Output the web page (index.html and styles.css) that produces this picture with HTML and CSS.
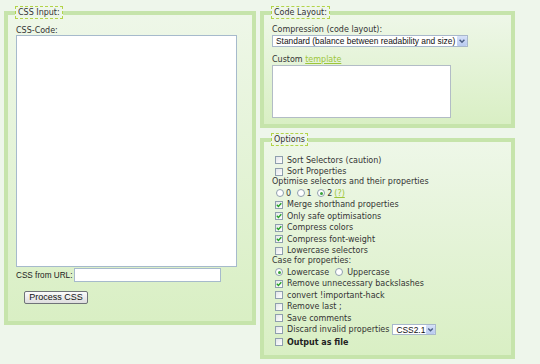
FILE: index.html
```html
<!DOCTYPE html>
<html>
<head>
<meta charset="utf-8">
<title>CSSTidy</title>
<link rel="stylesheet" href="styles.css">
</head>
<body>
<div class="page">
  <fieldset class="box input-box">
    <legend>CSS Input:</legend>
    <label class="lbl" for="css_text">CSS-Code:</label>
    <textarea id="css_text" class="code"></textarea>
    <div class="url-row">
      <label class="url-lbl" for="url">CSS from URL:</label>
      <input id="url" class="url" type="text">
    </div>
    <button class="btn" type="button">Process CSS</button>
  </fieldset>

  <div class="col">
    <fieldset class="box layout-box">
      <legend>Code Layout:</legend>
      <div class="lbl lbl-comp">Compression (code layout):</div>
      <div class="select sel-wide">
        <span class="sel-text">Standard (balance between readability and size)</span>
        <span class="arrow"><svg viewBox="0 0 10 10" width="10" height="10"><path d="M2.6 3.8 L5 6.2 L7.4 3.8" fill="none" stroke="#4b5f85" stroke-width="1.5"/></svg></span>
      </div>
      <div class="lbl lbl-custom">Custom <a class="lnk" href="#">template</a></div>
      <textarea class="tpl"></textarea>
    </fieldset>

    <fieldset class="box options">
      <legend>Options</legend>
      <div class="opt"><span class="cb"></span>Sort Selectors (caution)</div>
      <div class="opt"><span class="cb"></span>Sort Properties</div>
      <div class="txt">Optimise selectors and their properties</div>
      <div class="radios r-num">
        <span class="rb"></span><span>0</span>
        <span class="rb"></span><span>1</span>
        <span class="rb on"></span><span>2</span>
        <a class="lnk q" href="#">(?)</a>
      </div>
      <div class="opt"><span class="cb on"><svg viewBox="0 0 6 6" width="6" height="6"><path d="M0.8 2.8 L2.4 4.5 L5.3 1.2" fill="none" stroke="#24a224" stroke-width="1.3"/></svg></span>Merge shorthand properties</div>
      <div class="opt"><span class="cb on"><svg viewBox="0 0 6 6" width="6" height="6"><path d="M0.8 2.8 L2.4 4.5 L5.3 1.2" fill="none" stroke="#24a224" stroke-width="1.3"/></svg></span>Only safe optimisations</div>
      <div class="opt"><span class="cb on"><svg viewBox="0 0 6 6" width="6" height="6"><path d="M0.8 2.8 L2.4 4.5 L5.3 1.2" fill="none" stroke="#24a224" stroke-width="1.3"/></svg></span>Compress colors</div>
      <div class="opt"><span class="cb on"><svg viewBox="0 0 6 6" width="6" height="6"><path d="M0.8 2.8 L2.4 4.5 L5.3 1.2" fill="none" stroke="#24a224" stroke-width="1.3"/></svg></span>Compress font-weight</div>
      <div class="opt"><span class="cb"></span>Lowercase selectors</div>
      <div class="txt">Case for properties:</div>
      <div class="radios r-case">
        <span class="rb on"></span><span>Lowercase</span>
        <span class="rb"></span><span>Uppercase</span>
      </div>
      <div class="opt"><span class="cb on"><svg viewBox="0 0 6 6" width="6" height="6"><path d="M0.8 2.8 L2.4 4.5 L5.3 1.2" fill="none" stroke="#24a224" stroke-width="1.3"/></svg></span>Remove unnecessary backslashes</div>
      <div class="opt"><span class="cb"></span>convert !important-hack</div>
      <div class="opt"><span class="cb"></span>Remove last ;</div>
      <div class="opt"><span class="cb"></span>Save comments</div>
      <div class="opt opt-discard"><span class="cb"></span>Discard invalid properties
        <div class="select sel-small">
          <span class="sel-text">CSS2.1</span>
          <span class="arrow"><svg viewBox="0 0 9 9" width="9" height="9"><path d="M2.2 3.4 L4.5 5.7 L6.8 3.4" fill="none" stroke="#4b5f85" stroke-width="1.4"/></svg></span>
        </div>
      </div>
      <div class="opt opt-file"><span class="cb"></span><b>Output as file</b></div>
    </fieldset>
  </div>
</div>
</body>
</html>
```

FILE: styles.css
```css
html, body {
  margin: 0;
  padding: 0;
}

body {
  background: #eef6eb;
  color: #333;
  font-family: "DejaVu Sans", Verdana, sans-serif;
  font-size: 8px;
}

.page {
  display: flex;
  align-items: flex-start;
  gap: 4px;
  padding: 6px 0 0 4px;
}

.col {
  display: flex;
  flex-direction: column;
  width: 255px;
}

.box {
  box-sizing: border-box;
  min-width: 0;
  margin: 0;
  border: 4px solid #c6e4ab;
  background: linear-gradient(#eef7e8, #d9efc4);
  padding: 0 8px;
}

.box legend {
  border: 1px dashed #b3d448;
  padding: 0 2px;
  line-height: 11px;
  height: 11px;
  color: #333;
  margin-left: -1px;
}

.lbl {
  display: block;
  line-height: 9px;
  height: 9px;
}

/* CSS input */
.input-box {
  width: 252px;
  padding-top: 7px;
  padding-bottom: 17px;
}

.code {
  display: block;
  box-sizing: border-box;
  width: 221px;
  height: 232px;
  margin: 0;
  padding: 0;
  border: 1px solid #a6bacc;
  background: #fff;
  resize: none;
}

.url-row {
  display: flex;
  align-items: center;
  height: 14px;
  margin-top: 1px;
  gap: 2px;
}

.url-lbl {
  font-family: "Liberation Sans", Arial, sans-serif;
  font-size: 8.2px;
  color: #222;
  width: 56px;
  white-space: nowrap;
}

.url {
  box-sizing: border-box;
  width: 147px;
  height: 14px;
  margin: 0;
  padding: 0;
  border: 1px solid #a6bacc;
  background: #fff;
}

.btn {
  display: block;
  box-sizing: border-box;
  width: 64px;
  height: 13px;
  margin: 9px 0 0 8px;
  padding: 0;
  border: 1px solid #6f7378;
  border-radius: 2px;
  background: linear-gradient(#fbfbfb, #dedede);
  font-family: "Liberation Sans", Arial, sans-serif;
  font-size: 9px;
  line-height: 11px;
  color: #111;
}

/* Code layout */
.layout-box {
  width: 255px;
  padding-top: 5.5px;
  padding-bottom: 6px;
}

.lbl-comp {
  height: 10.5px;
  line-height: 10.5px;
}

.select {
  display: flex;
  align-items: center;
  box-sizing: border-box;
  border: 1px solid #a8b8cb;
  background: #fff;
  font-family: "Liberation Sans", Arial, sans-serif;
  font-size: 8.4px;
  color: #111;
}

.sel-wide {
  width: 196px;
  height: 12px;
}

.sel-text {
  flex: 1;
  padding-left: 3px;
  white-space: nowrap;
  overflow: hidden;
}

.arrow {
  display: flex;
  box-sizing: border-box;
  width: 10px;
  height: 10px;
  background: linear-gradient(#d6e1f8, #b9cbf0);
  border-radius: 1px;
}

.arrow svg {
  display: block;
}

.lbl-custom {
  margin-top: 8px;
  height: 10px;
  line-height: 10px;
}

.lnk {
  color: #9dc63a;
  text-decoration: underline;
}

.tpl {
  display: block;
  box-sizing: border-box;
  width: 179px;
  height: 53px;
  margin: 0;
  padding: 0;
  border: 1px solid #b2bcc6;
  background: #fff;
  resize: none;
}

/* Options */
.options {
  width: 255px;
  margin-top: 5px;
  padding-top: 8.25px;
  padding-bottom: 6.25px;
}

.opt {
  display: flex;
  align-items: center;
  height: 11.5px;
  white-space: nowrap;
}

.cb {
  display: flex;
  align-items: center;
  justify-content: center;
  box-sizing: border-box;
  width: 8px;
  height: 8px;
  margin: 0 4px 0 3px;
  border: 1px solid #8f9fae;
  background: linear-gradient(135deg, #e3e6e9, #ffffff);
  flex: none;
}

.cb svg {
  display: block;
}

.txt {
  height: 10.5px;
  line-height: 10.5px;
}

.radios {
  display: flex;
  align-items: center;
  height: 11px;
}

.rb {
  display: flex;
  align-items: center;
  justify-content: center;
  box-sizing: border-box;
  width: 8px;
  height: 8px;
  border-radius: 50%;
  border: 1px solid #909fae;
  background: #fff;
  flex: none;
}

.rb.on::after {
  content: "";
  width: 3px;
  height: 3px;
  border-radius: 50%;
  background: #3aa33a;
}

.r-num .rb {
  margin: 0 2px 0 5.5px;
}

.r-num .rb:first-child {
  margin-left: 4px;
}

.r-num .q {
  margin-left: 2px;
}

.r-case .rb {
  margin: 0 4px 0 6px;
}

.r-case .rb:first-child {
  margin-left: 3px;
}

.opt-discard {
  height: 12px;
}

.sel-small {
  width: 44px;
  height: 11px;
  margin-left: 3px;
}

.sel-small .arrow {
  width: 9px;
  height: 9px;
}

.opt-file {
  height: 13px;
}

.opt-file b {
  font-weight: bold;
  color: #222;
}
```
